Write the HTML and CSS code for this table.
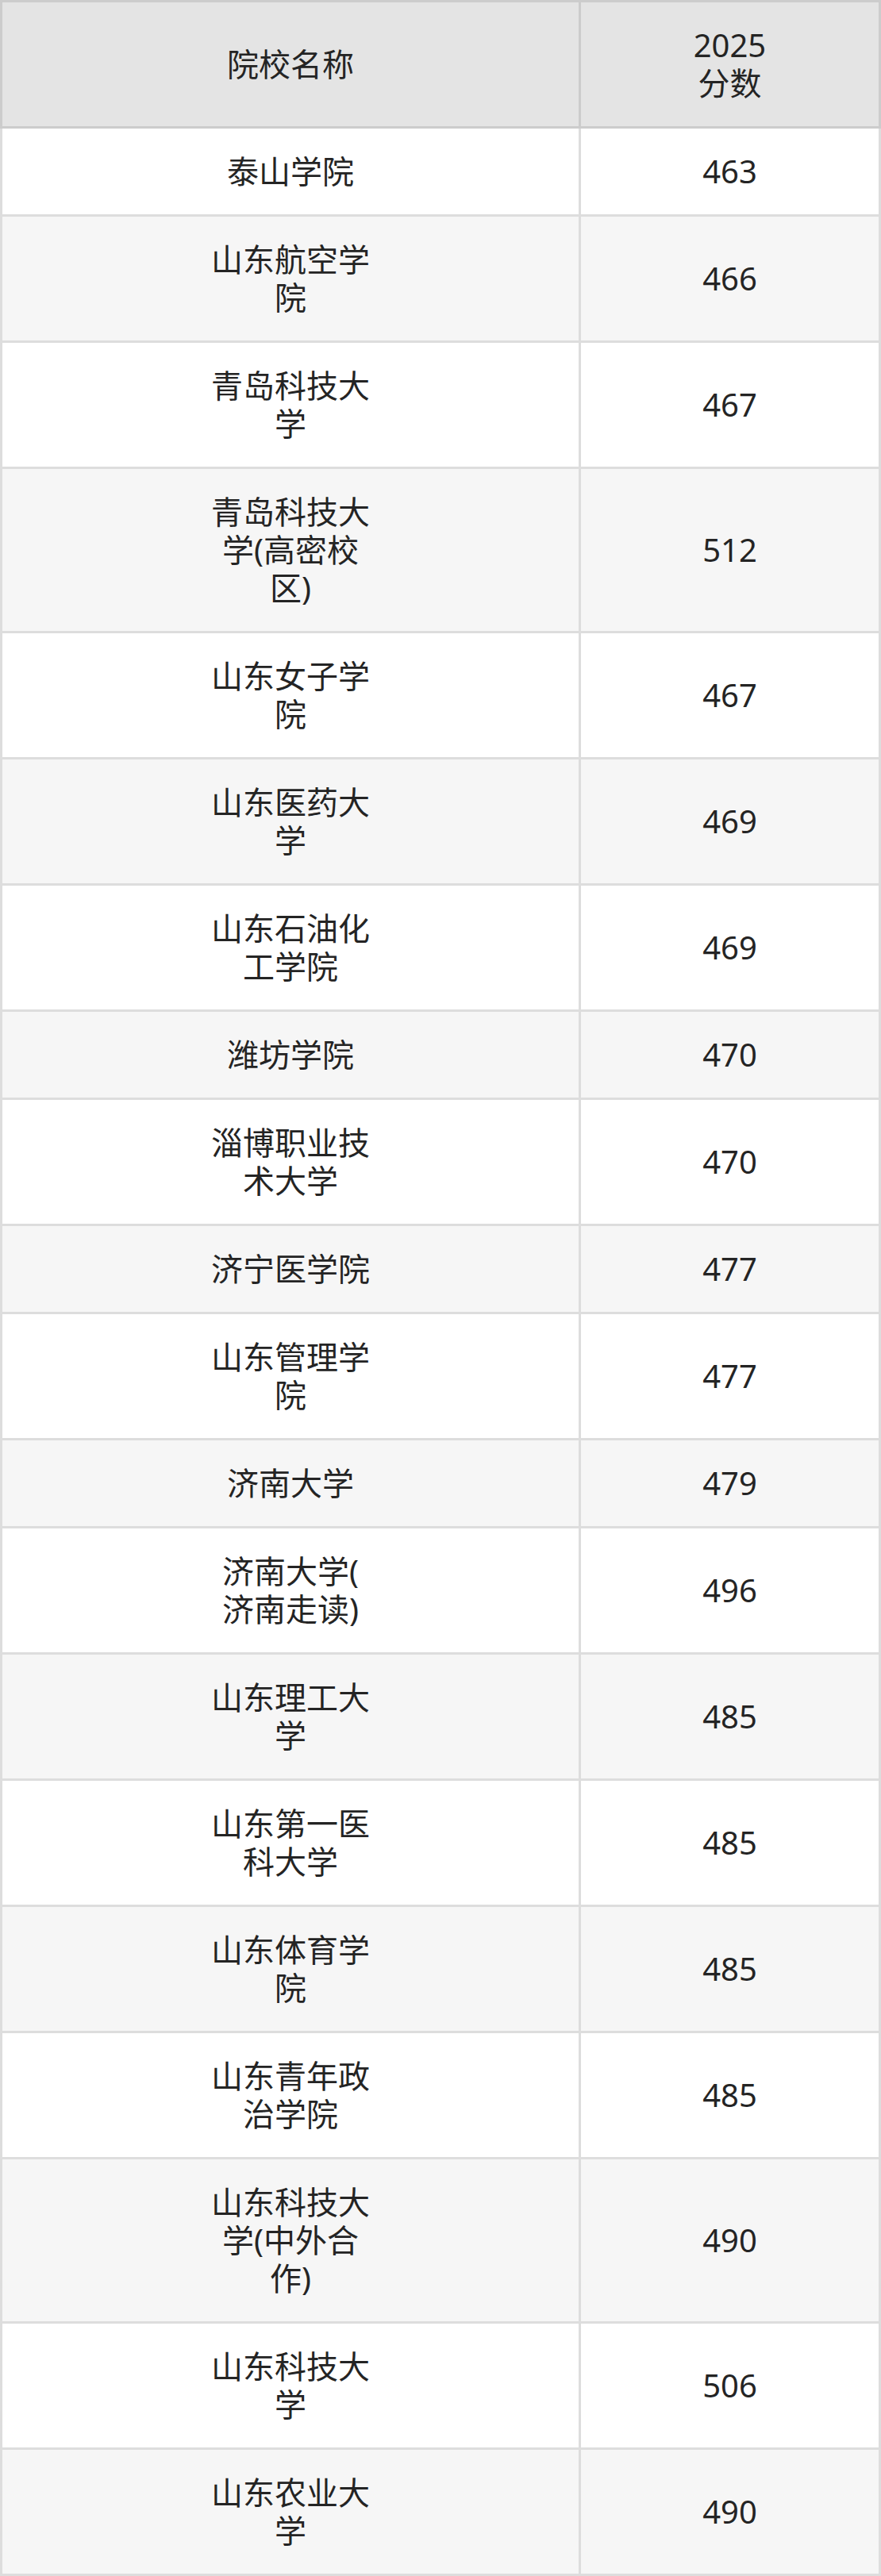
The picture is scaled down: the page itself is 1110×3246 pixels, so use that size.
FILE: index.html
```html
<!DOCTYPE html>
<html lang="zh-CN">
<head>
<meta charset="utf-8">
<title>院校分数</title>
<link rel="stylesheet" href="styles.css">
</head>
<body>
<div class="score-table">
  <div class="cell head name"><div class="txt">院校名称</div></div>
  <div class="cell head score"><div class="txt">2025<br>分数</div></div>

  <div class="cell name odd"><div class="txt">泰山学院</div></div>
  <div class="cell score odd"><div class="txt">463</div></div>

  <div class="cell name even"><div class="txt">山东航空学院</div></div>
  <div class="cell score even"><div class="txt">466</div></div>

  <div class="cell name odd"><div class="txt">青岛科技大学</div></div>
  <div class="cell score odd"><div class="txt">467</div></div>

  <div class="cell name even"><div class="txt">青岛科技大学(高密校区)</div></div>
  <div class="cell score even"><div class="txt">512</div></div>

  <div class="cell name odd"><div class="txt">山东女子学院</div></div>
  <div class="cell score odd"><div class="txt">467</div></div>

  <div class="cell name even"><div class="txt">山东医药大学</div></div>
  <div class="cell score even"><div class="txt">469</div></div>

  <div class="cell name odd"><div class="txt">山东石油化工学院</div></div>
  <div class="cell score odd"><div class="txt">469</div></div>

  <div class="cell name even"><div class="txt">潍坊学院</div></div>
  <div class="cell score even"><div class="txt">470</div></div>

  <div class="cell name odd"><div class="txt">淄博职业技术大学</div></div>
  <div class="cell score odd"><div class="txt">470</div></div>

  <div class="cell name even"><div class="txt">济宁医学院</div></div>
  <div class="cell score even"><div class="txt">477</div></div>

  <div class="cell name odd"><div class="txt">山东管理学院</div></div>
  <div class="cell score odd"><div class="txt">477</div></div>

  <div class="cell name even"><div class="txt">济南大学</div></div>
  <div class="cell score even"><div class="txt">479</div></div>

  <div class="cell name odd"><div class="txt">济南大学(济南走读)</div></div>
  <div class="cell score odd"><div class="txt">496</div></div>

  <div class="cell name even"><div class="txt">山东理工大学</div></div>
  <div class="cell score even"><div class="txt">485</div></div>

  <div class="cell name odd"><div class="txt">山东第一医科大学</div></div>
  <div class="cell score odd"><div class="txt">485</div></div>

  <div class="cell name even"><div class="txt">山东体育学院</div></div>
  <div class="cell score even"><div class="txt">485</div></div>

  <div class="cell name odd"><div class="txt">山东青年政治学院</div></div>
  <div class="cell score odd"><div class="txt">485</div></div>

  <div class="cell name even"><div class="txt">山东科技大学(中外合作)</div></div>
  <div class="cell score even"><div class="txt">490</div></div>

  <div class="cell name odd"><div class="txt">山东科技大学</div></div>
  <div class="cell score odd"><div class="txt">506</div></div>

  <div class="cell name even"><div class="txt">山东农业大学</div></div>
  <div class="cell score even"><div class="txt">490</div></div>
</div>
</body>
</html>
```

FILE: styles.css
```css
html, body {
  margin: 0;
  padding: 0;
  background: #ffffff;
}

.score-table {
  width: 1110px;
  display: grid;
  grid-template-columns: 732px 378px;
  font-family: "Noto Sans", "Noto Sans CJK SC", sans-serif;
  font-size: 40px;
  line-height: 48px;
  color: #242424;
}

.cell {
  box-sizing: border-box;
  display: flex;
  align-items: center;
  justify-content: center;
  padding: 30px 0;
  border-right: 3px solid #dddddd;
  border-bottom: 3px solid #dddddd;
  text-align: center;
}

.cell.name {
  border-left: 3px solid #dddddd;
}

.cell.head {
  background: #e4e4e4;
  border-top: 3px solid #cccccc;
  border-right-color: #cccccc;
  border-bottom-color: #cccccc;
  border-left-color: #cccccc;
}

.cell.odd {
  background: #ffffff;
}

.cell.even {
  background: #f6f6f6;
}

.txt {
  width: 206px;
  word-break: break-all;
  line-break: anywhere;
}
```
